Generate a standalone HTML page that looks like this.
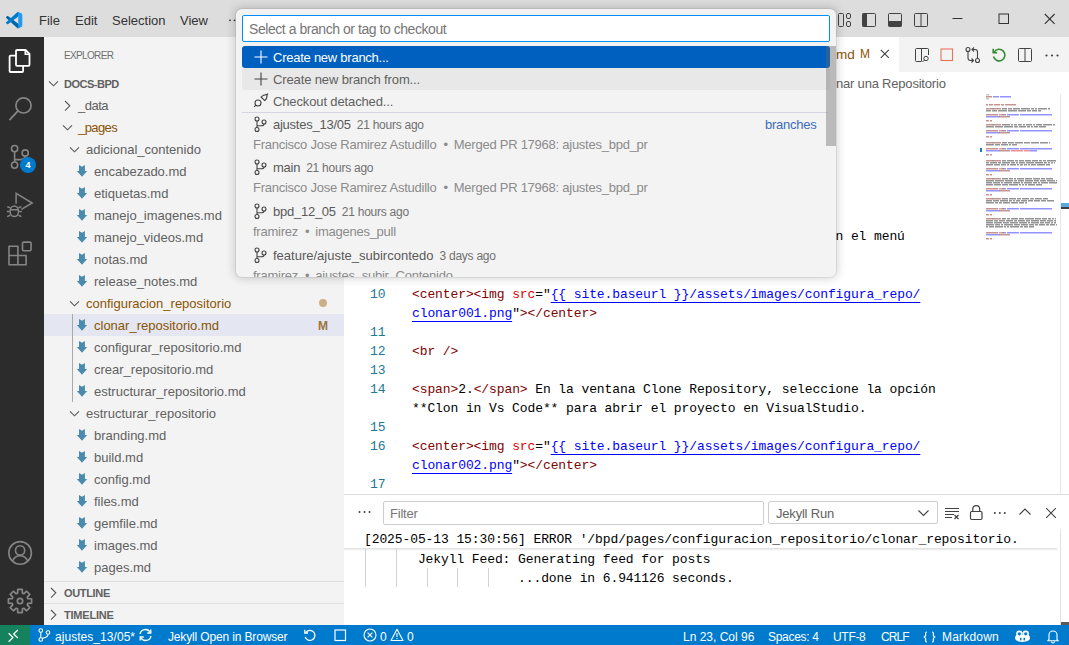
<!DOCTYPE html>
<html><head><meta charset="utf-8">
<style>
*{margin:0;padding:0;box-sizing:border-box}
html,body{width:1069px;height:645px;overflow:hidden;background:#fff}
body{position:relative;font-family:"Liberation Sans",sans-serif;font-size:13px;color:#616161}
.a{position:absolute;white-space:nowrap}
svg{position:absolute;overflow:visible}
#title{left:0;top:0;width:1069px;height:37px;background:#dddddd}
#act{left:0;top:37px;width:44px;height:588px;background:#2c2c2c}
#side{left:44px;top:37px;width:300px;height:588px;background:#f3f3f3}
#tabs{left:344px;top:37px;width:725px;height:35px;background:#f3f3f3}
#status{left:0;top:625px;width:1069px;height:20px;background:#007acc;color:#fff;font-size:12px}
.row{position:absolute;left:0;width:300px;height:22px;line-height:22px}
.mono{font-family:"Liberation Mono",monospace}
.ln{color:#237893;font-family:"Liberation Mono",monospace;font-size:13px;letter-spacing:-0.1px}
.code{color:#000;font-family:"Liberation Mono",monospace;font-size:13px;letter-spacing:-0.1px}
.tg{color:#800000}.at{color:#e50000}.lk{color:#0000ff;text-decoration:underline;text-underline-offset:4px;text-decoration-skip-ink:none}
</style></head><body>
<!-- TITLE BAR -->
<div id="title" class="a">
<svg style="left:5.7px;top:11.8px" width="16.3" height="16.3" viewBox="0 0 100 100">
<path d="M96.46 89.2 L75.86 99.1 C73.48 100.25 70.63 99.76 68.76 97.9 L1.34 36.41 C-0.47 34.75 -0.47 31.9 1.35 30.25 L6.86 25.24 C8.35 23.89 10.58 23.79 12.18 25.01 L93.41 86.63 C96.13 88.7 100 86.75 100 83.34 V83.58 C100 85.97 98.63 88.15 96.46 89.2 Z" fill="#0065a9"/>
<path d="M96.46 10.8 L75.86 0.9 C73.48 -0.25 70.63 0.24 68.76 2.1 L1.34 63.59 C-0.47 65.25 -0.47 68.1 1.35 69.75 L6.86 74.76 C8.35 76.11 10.58 76.21 12.18 74.99 L93.41 13.37 C96.13 11.3 100 13.25 100 16.66 V16.42 C100 14.03 98.63 11.85 96.46 10.8 Z" fill="#007acc"/>
<path d="M75.86 99.1 C73.48 100.25 70.63 99.76 68.76 97.9 C71.07 100.2 75 98.57 75 95.31 V4.69 C75 1.43 71.07 -0.2 68.76 2.1 C70.63 0.24 73.48 -0.25 75.86 0.9 L96.46 10.8 C98.63 11.85 100 14.03 100 16.42 V83.58 C100 85.97 98.63 88.15 96.46 89.2 Z" fill="#1f9cf0"/>
</svg>
<div class="a" style="left:39px;top:13px;color:#333;font-size:13px">File</div>
<div class="a" style="left:75px;top:13px;color:#333;font-size:13px">Edit</div>
<div class="a" style="left:112px;top:13px;color:#333;font-size:13px">Selection</div>
<div class="a" style="left:180px;top:13px;color:#333;font-size:13px">View</div>
<svg style="left:227.5px;top:14px" width="14" height="12" viewBox="0 0 14 12"><circle cx="2" cy="6.3" r="0.9" fill="#333"/><circle cx="6.5" cy="6.3" r="0.9" fill="#333"/><circle cx="11" cy="6.3" r="0.9" fill="#333"/></svg>
<!-- layout icons -->
<svg style="left:837px;top:12px" width="16" height="16" viewBox="0 0 16 16"><rect x="1.5" y="1.5" width="5" height="13" rx="1" fill="none" stroke="#424242"/><rect x="9.5" y="1.5" width="4" height="5" rx="1.5" fill="none" stroke="#424242"/><rect x="9.5" y="9.5" width="4" height="5" rx="1.5" fill="none" stroke="#424242"/></svg>
<svg style="left:861px;top:12px" width="16" height="16" viewBox="0 0 16 16"><rect x="1.5" y="1.5" width="13" height="13" rx="1" fill="none" stroke="#424242"/><rect x="1.5" y="1.5" width="4.5" height="13" fill="#424242"/></svg>
<svg style="left:887px;top:12px" width="16" height="16" viewBox="0 0 16 16"><rect x="1.5" y="1.5" width="13" height="13" rx="1" fill="none" stroke="#424242"/><rect x="1.5" y="9" width="13" height="5.5" fill="#424242"/></svg>
<svg style="left:913px;top:12px" width="16" height="16" viewBox="0 0 16 16"><rect x="1.5" y="1.5" width="13" height="13" rx="1" fill="none" stroke="#424242"/><line x1="8" y1="1.5" x2="8" y2="14.5" stroke="#424242"/></svg>
<svg style="left:952px;top:13px" width="12" height="12" viewBox="0 0 12 12"><line x1="0.5" y1="5.5" x2="10.5" y2="5.5" stroke="#333"/></svg>
<svg style="left:998px;top:13px" width="12" height="12" viewBox="0 0 12 12"><rect x="1" y="1" width="9.5" height="9.5" fill="none" stroke="#333"/></svg>
<svg style="left:1044px;top:13px" width="12" height="12" viewBox="0 0 12 12"><path d="M0.8 1 L10.6 10.8 M10.6 1 L0.8 10.8" stroke="#333" stroke-width="1.1"/></svg>
</div>
<div id="act" class="a">
<!-- files -->
<svg style="left:8px;top:10px" width="26" height="28" viewBox="0 0 26 28">
<path d="M8 8.7 H2.6 Q1.6 8.7 1.6 9.7 V24 Q1.6 25 2.6 25 H14.1 Q15.1 25 15.1 24 V18.8" fill="none" stroke="#fff" stroke-width="1.8"/>
<path d="M8 4 Q8 3 9 3 H17.5 L21.5 7 V17.8 Q21.5 18.8 20.5 18.8 H9 Q8 18.8 8 17.8 Z" fill="none" stroke="#fff" stroke-width="1.8" stroke-linejoin="round"/>
<path d="M17.3 3.5 V7.2 H21" fill="none" stroke="#fff" stroke-width="1.6"/>
</svg>
<!-- search -->
<svg style="left:8px;top:59px" width="26" height="26" viewBox="0 0 26 26">
<circle cx="15.5" cy="9.4" r="7.6" fill="none" stroke="#858585" stroke-width="1.7"/>
<line x1="10" y1="14.9" x2="1.9" y2="23.6" stroke="#858585" stroke-width="1.8" stroke-linecap="round"/>
</svg>
<!-- scm -->
<svg style="left:10px;top:107px" width="24" height="26" viewBox="0 0 24 26">
<circle cx="4.6" cy="4.6" r="3.1" fill="none" stroke="#858585" stroke-width="1.6"/>
<circle cx="4.6" cy="21.1" r="3.1" fill="none" stroke="#858585" stroke-width="1.6"/>
<circle cx="15.2" cy="9" r="3.1" fill="none" stroke="#858585" stroke-width="1.6"/>
<line x1="4.6" y1="7.7" x2="4.6" y2="18" stroke="#858585" stroke-width="1.6"/>
<path d="M15.2 12.1 Q15.2 15.6 10 15.6 H4.6" fill="none" stroke="#858585" stroke-width="1.6"/>
</svg>
<div class="a" style="left:20px;top:120px;width:16px;height:16px;border-radius:8px;background:#007acc;color:#fff;font-size:9px;font-weight:bold;text-align:center;line-height:16px">4</div>
<!-- debug -->
<svg style="left:0px;top:151px" width="44" height="40" viewBox="0 0 44 40">
<path d="M16.1 15.8 V5.3 L32.2 15 L21.4 21.3" fill="none" stroke="#858585" stroke-width="1.5" stroke-linejoin="miter"/>
<ellipse cx="14.3" cy="23.3" rx="4.2" ry="5.3" fill="none" stroke="#858585" stroke-width="1.5"/>
<path d="M10.2 21.8 H18.4 M7.2 18.6 L10.2 19.8 M21.4 18.6 L18.4 19.8 M6.8 23.6 H9.8 M21.8 23.6 H18.8 M7.2 28.6 L10.2 27.3 M21.4 28.6 L18.4 27.3" fill="none" stroke="#858585" stroke-width="1.5"/>
</svg>
<!-- extensions -->
<svg style="left:0px;top:199px" width="44" height="34" viewBox="0 0 44 34">
<path d="M9 10.3 H17.9 V19.5 H26.1 V28.7 H9 Z M9 19.5 H17.9 V28.7" fill="none" stroke="#858585" stroke-width="1.6" stroke-linejoin="round"/>
<rect x="22.5" y="6.1" width="8.6" height="8.6" rx="1.2" fill="none" stroke="#858585" stroke-width="1.6"/>
</svg>
<!-- account -->
<svg style="left:7px;top:502px" width="28" height="28" viewBox="0 0 28 28">
<circle cx="13.1" cy="13.9" r="11.3" fill="none" stroke="#858585" stroke-width="1.6"/>
<circle cx="13.1" cy="11.4" r="4.6" fill="none" stroke="#858585" stroke-width="1.6"/>
<path d="M5.6 22 Q7.6 16.7 13.1 16.7 Q18.6 16.7 20.6 22" fill="none" stroke="#858585" stroke-width="1.6"/>
</svg>
<!-- settings -->
<svg style="left:7px;top:551px" width="28" height="28" viewBox="0 0 28 28">
<path id="gear" d="M10.58 5.17 L10.77 1.41 L15.23 1.41 L15.42 5.17 L16.83 5.75 L19.62 3.23 L22.77 6.38 L20.25 9.17 L20.83 10.58 L24.59 10.77 L24.59 15.23 L20.83 15.42 L20.25 16.83 L22.77 19.62 L19.62 22.77 L16.83 20.25 L15.42 20.83 L15.23 24.59 L10.77 24.59 L10.58 20.83 L9.17 20.25 L6.38 22.77 L3.23 19.62 L5.75 16.83 L5.17 15.42 L1.41 15.23 L1.41 10.77 L5.17 10.58 L5.75 9.17 L3.23 6.38 L6.38 3.23 L9.17 5.75 Z" fill="none" stroke="#858585" stroke-width="1.7" stroke-linejoin="round"/>
<circle cx="13" cy="13" r="2.7" fill="none" stroke="#858585" stroke-width="1.7"/>
</svg>
</div>
<div id="side" class="a">
<div class="a" style="left:20px;top:13px;font-size:10px;letter-spacing:-0.65px;color:#6f6f6f">EXPLORER</div>
<svg style="left:4px;top:41px" width="12" height="12" viewBox="0 0 12 12"><path d="M1 3.3 L5.5 7.8 L10 3.3" fill="none" stroke="#5a5a5a" stroke-width="1.15"/></svg>
<div class="a" style="left:20px;top:36px;line-height:22px;font-size:11px;font-weight:bold;letter-spacing:-0.5px;color:#616161">DOCS-BPD</div>
<div class="a" style="left:0;top:277px;width:300px;height:22px;background:#e4e6f1"></div>
<div class="a" style="left:28px;top:277px;width:1px;height:88px;background:#a9a9a9"></div>
<svg style="left:17.5px;top:63px" width="12" height="12" viewBox="0 0 12 12"><path d="M3 1 L7.8 5.8 L3 10.6" fill="none" stroke="#5a5a5a" stroke-width="1.15"/></svg>
<div class="a" style="left:34px;top:58px;line-height:22px;color:#616161;letter-spacing:-0.5px">_data</div>
<svg style="left:18px;top:85px" width="12" height="12" viewBox="0 0 12 12"><path d="M1 3.3 L5.5 7.8 L10 3.3" fill="none" stroke="#5a5a5a" stroke-width="1.15"/></svg>
<div class="a" style="left:34px;top:80px;line-height:22px;color:#895503;letter-spacing:-0.6px">_pages</div>
<svg style="left:25px;top:107px" width="12" height="12" viewBox="0 0 12 12"><path d="M1 3.3 L5.5 7.8 L10 3.3" fill="none" stroke="#5a5a5a" stroke-width="1.15"/></svg>
<div class="a" style="left:42px;top:102px;line-height:22px;color:#616161">adicional_contenido</div>
<svg style="left:28px;top:123px" width="20" height="22" viewBox="0 0 20 22"><path d="M7 5.1 L10 6.8 L12.9 5.1 V11.1 H15.2 L10 16.7 L4.8 11.1 H7 Z" fill="#4a8bad"/></svg>
<div class="a" style="left:50px;top:124px;line-height:22px;color:#616161">encabezado.md</div>
<svg style="left:28px;top:145px" width="20" height="22" viewBox="0 0 20 22"><path d="M7 5.1 L10 6.8 L12.9 5.1 V11.1 H15.2 L10 16.7 L4.8 11.1 H7 Z" fill="#4a8bad"/></svg>
<div class="a" style="left:50px;top:146px;line-height:22px;color:#616161">etiquetas.md</div>
<svg style="left:28px;top:167px" width="20" height="22" viewBox="0 0 20 22"><path d="M7 5.1 L10 6.8 L12.9 5.1 V11.1 H15.2 L10 16.7 L4.8 11.1 H7 Z" fill="#4a8bad"/></svg>
<div class="a" style="left:50px;top:168px;line-height:22px;color:#616161">manejo_imagenes.md</div>
<svg style="left:28px;top:189px" width="20" height="22" viewBox="0 0 20 22"><path d="M7 5.1 L10 6.8 L12.9 5.1 V11.1 H15.2 L10 16.7 L4.8 11.1 H7 Z" fill="#4a8bad"/></svg>
<div class="a" style="left:50px;top:190px;line-height:22px;color:#616161">manejo_videos.md</div>
<svg style="left:28px;top:211px" width="20" height="22" viewBox="0 0 20 22"><path d="M7 5.1 L10 6.8 L12.9 5.1 V11.1 H15.2 L10 16.7 L4.8 11.1 H7 Z" fill="#4a8bad"/></svg>
<div class="a" style="left:50px;top:212px;line-height:22px;color:#616161">notas.md</div>
<svg style="left:28px;top:233px" width="20" height="22" viewBox="0 0 20 22"><path d="M7 5.1 L10 6.8 L12.9 5.1 V11.1 H15.2 L10 16.7 L4.8 11.1 H7 Z" fill="#4a8bad"/></svg>
<div class="a" style="left:50px;top:234px;line-height:22px;color:#616161">release_notes.md</div>
<svg style="left:25px;top:261px" width="12" height="12" viewBox="0 0 12 12"><path d="M1 3.3 L5.5 7.8 L10 3.3" fill="none" stroke="#5a5a5a" stroke-width="1.15"/></svg>
<div class="a" style="left:42px;top:256px;line-height:22px;color:#895503">configuracion_repositorio</div>
<svg style="left:28px;top:277px" width="20" height="22" viewBox="0 0 20 22"><path d="M7 5.1 L10 6.8 L12.9 5.1 V11.1 H15.2 L10 16.7 L4.8 11.1 H7 Z" fill="#4a8bad"/></svg>
<div class="a" style="left:50px;top:278px;line-height:22px;color:#895503">clonar_repositorio.md</div>
<svg style="left:28px;top:299px" width="20" height="22" viewBox="0 0 20 22"><path d="M7 5.1 L10 6.8 L12.9 5.1 V11.1 H15.2 L10 16.7 L4.8 11.1 H7 Z" fill="#4a8bad"/></svg>
<div class="a" style="left:50px;top:300px;line-height:22px;color:#616161">configurar_repositorio.md</div>
<svg style="left:28px;top:321px" width="20" height="22" viewBox="0 0 20 22"><path d="M7 5.1 L10 6.8 L12.9 5.1 V11.1 H15.2 L10 16.7 L4.8 11.1 H7 Z" fill="#4a8bad"/></svg>
<div class="a" style="left:50px;top:322px;line-height:22px;color:#616161">crear_repositorio.md</div>
<svg style="left:28px;top:343px" width="20" height="22" viewBox="0 0 20 22"><path d="M7 5.1 L10 6.8 L12.9 5.1 V11.1 H15.2 L10 16.7 L4.8 11.1 H7 Z" fill="#4a8bad"/></svg>
<div class="a" style="left:50px;top:344px;line-height:22px;color:#616161">estructurar_repositorio.md</div>
<svg style="left:25px;top:371px" width="12" height="12" viewBox="0 0 12 12"><path d="M1 3.3 L5.5 7.8 L10 3.3" fill="none" stroke="#5a5a5a" stroke-width="1.15"/></svg>
<div class="a" style="left:42px;top:366px;line-height:22px;color:#616161">estructurar_repositorio</div>
<svg style="left:28px;top:387px" width="20" height="22" viewBox="0 0 20 22"><path d="M7 5.1 L10 6.8 L12.9 5.1 V11.1 H15.2 L10 16.7 L4.8 11.1 H7 Z" fill="#4a8bad"/></svg>
<div class="a" style="left:50px;top:388px;line-height:22px;color:#616161">branding.md</div>
<svg style="left:28px;top:409px" width="20" height="22" viewBox="0 0 20 22"><path d="M7 5.1 L10 6.8 L12.9 5.1 V11.1 H15.2 L10 16.7 L4.8 11.1 H7 Z" fill="#4a8bad"/></svg>
<div class="a" style="left:50px;top:410px;line-height:22px;color:#616161">build.md</div>
<svg style="left:28px;top:431px" width="20" height="22" viewBox="0 0 20 22"><path d="M7 5.1 L10 6.8 L12.9 5.1 V11.1 H15.2 L10 16.7 L4.8 11.1 H7 Z" fill="#4a8bad"/></svg>
<div class="a" style="left:50px;top:432px;line-height:22px;color:#616161">config.md</div>
<svg style="left:28px;top:453px" width="20" height="22" viewBox="0 0 20 22"><path d="M7 5.1 L10 6.8 L12.9 5.1 V11.1 H15.2 L10 16.7 L4.8 11.1 H7 Z" fill="#4a8bad"/></svg>
<div class="a" style="left:50px;top:454px;line-height:22px;color:#616161">files.md</div>
<svg style="left:28px;top:475px" width="20" height="22" viewBox="0 0 20 22"><path d="M7 5.1 L10 6.8 L12.9 5.1 V11.1 H15.2 L10 16.7 L4.8 11.1 H7 Z" fill="#4a8bad"/></svg>
<div class="a" style="left:50px;top:476px;line-height:22px;color:#616161">gemfile.md</div>
<svg style="left:28px;top:497px" width="20" height="22" viewBox="0 0 20 22"><path d="M7 5.1 L10 6.8 L12.9 5.1 V11.1 H15.2 L10 16.7 L4.8 11.1 H7 Z" fill="#4a8bad"/></svg>
<div class="a" style="left:50px;top:498px;line-height:22px;color:#616161">images.md</div>
<svg style="left:28px;top:519px" width="20" height="22" viewBox="0 0 20 22"><path d="M7 5.1 L10 6.8 L12.9 5.1 V11.1 H15.2 L10 16.7 L4.8 11.1 H7 Z" fill="#4a8bad"/></svg>
<div class="a" style="left:50px;top:520px;line-height:22px;color:#616161">pages.md</div>
<div class="a" style="left:275px;top:262px;width:8px;height:8px;border-radius:4px;background:#cdb08a"></div>
<div class="a" style="left:274px;top:278px;line-height:22px;color:#9a7540;font-size:12px;font-weight:bold">M</div>
<div class="a" style="left:0;top:544px;width:300px;height:1px;background:#e0e0e0"></div>
<svg style="left:4px;top:550px" width="12" height="12" viewBox="0 0 12 12"><path d="M3 1 L7.8 5.8 L3 10.6" fill="none" stroke="#5a5a5a" stroke-width="1.15"/></svg>
<div class="a" style="left:20px;top:545px;line-height:22px;font-size:11px;font-weight:bold;letter-spacing:-0.33px;color:#616161">OUTLINE</div>
<div class="a" style="left:0;top:566px;width:300px;height:1px;background:#e0e0e0"></div>
<svg style="left:4px;top:572px" width="12" height="12" viewBox="0 0 12 12"><path d="M3 1 L7.8 5.8 L3 10.6" fill="none" stroke="#5a5a5a" stroke-width="1.15"/></svg>
<div class="a" style="left:20px;top:567px;line-height:22px;font-size:11px;font-weight:bold;letter-spacing:-0.22px;color:#616161">TIMELINE</div>
</div>
<div id="tabs" class="a">
<div class="a" style="left:0;top:0;width:555px;height:35px;background:#fff"></div>
<div class="a" style="left:492px;top:0;line-height:36px;color:#895503;font-size:13.5px">md</div>
<div class="a" style="left:516px;top:0;line-height:35px;color:#895503;font-size:12px">M</div>
<svg style="left:536px;top:12px" width="10" height="10" viewBox="0 0 10 10"><path d="M0.8 0.8 L8.8 8.8 M8.8 0.8 L0.8 8.8" stroke="#424242" stroke-width="1.1"/></svg>
<!-- editor actions -->
<svg style="left:570px;top:10px" width="16" height="16" viewBox="0 0 16 16"><path d="M7 14.5 H2.5 Q1.5 14.5 1.5 13.5 V2.5 Q1.5 1.5 2.5 1.5 H13.5 Q14.5 1.5 14.5 2.5 V8" fill="none" stroke="#424242"/><line x1="7.5" y1="1.5" x2="7.5" y2="14.5" stroke="#424242"/><circle cx="12" cy="11.5" r="2.2" fill="none" stroke="#424242"/><line x1="10.4" y1="13.1" x2="8.5" y2="15" stroke="#424242"/></svg>
<svg style="left:596px;top:11px" width="14" height="14" viewBox="0 0 14 14"><rect x="1" y="1" width="11.5" height="11.5" fill="none" stroke="#e8735d" stroke-width="1.1"/></svg>
<svg style="left:620px;top:9px" width="18" height="18" viewBox="0 0 18 18"><circle cx="4" cy="3.5" r="2" fill="none" stroke="#424242" stroke-width="1.1"/><circle cx="13.5" cy="14.5" r="2" fill="none" stroke="#424242" stroke-width="1.1"/><path d="M4 5.5 V12 Q4 14.5 6.5 14.5 H9 M7.5 12.5 L9.5 14.5 L7.5 16.5" fill="none" stroke="#424242" stroke-width="1.1"/><path d="M13.5 12.5 V6 Q13.5 3.5 11 3.5 H8.5 M10 1.5 L8 3.5 L10 5.5" fill="none" stroke="#424242" stroke-width="1.1"/></svg>
<svg style="left:647px;top:10px" width="16" height="16" viewBox="0 0 16 16"><path d="M3.2 5 A5.8 5.8 0 1 1 2.5 9.5" fill="none" stroke="#388a34" stroke-width="1.6"/><path d="M2.2 1.8 V5.8 H6.2" fill="none" stroke="#388a34" stroke-width="1.6"/></svg>
<svg style="left:673px;top:10px" width="16" height="16" viewBox="0 0 16 16"><rect x="1.5" y="1.5" width="13" height="13" rx="1" fill="none" stroke="#424242"/><line x1="8" y1="1.5" x2="8" y2="14.5" stroke="#424242"/></svg>
<svg style="left:700px;top:10px" width="16" height="16" viewBox="0 0 16 16"><circle cx="2.5" cy="8.5" r="1.1" fill="#424242"/><circle cx="8" cy="8.5" r="1.1" fill="#424242"/><circle cx="13.5" cy="8.5" r="1.1" fill="#424242"/></svg>
</div>
<!-- breadcrumbs -->
<div class="a" style="left:836px;top:73px;line-height:22px;color:#616161;letter-spacing:-0.2px">nar una Repositorio</div>

<!-- EDITOR CODE -->
<div class="a code" style="left:835.5px;top:227px;line-height:19px;color:#000">n el menú</div>
<div class="a ln" style="left:370px;top:285px;line-height:19px">10</div>
<div class="a code" style="left:412px;top:285px;line-height:19px"><span class="tg">&lt;center&gt;&lt;img</span> <span class="at">src</span>="<span class="lk">{{ site.baseurl }}/assets/images/configura_repo/</span></div>
<div class="a code" style="left:412px;top:304px;line-height:19px"><span class="lk">clonar001.png</span>"<span class="tg">&gt;&lt;/center&gt;</span></div>
<div class="a ln" style="left:370px;top:323px;line-height:19px">11</div>
<div class="a ln" style="left:370px;top:342px;line-height:19px">12</div>
<div class="a code" style="left:412px;top:342px;line-height:19px"><span class="tg">&lt;br /&gt;</span></div>
<div class="a ln" style="left:370px;top:361px;line-height:19px">13</div>
<div class="a ln" style="left:370px;top:380px;line-height:19px">14</div>
<div class="a code" style="left:412px;top:380px;line-height:19px"><span class="tg">&lt;span&gt;</span>2.<span class="tg">&lt;/span&gt;</span> En la ventana Clone Repository, seleccione la opción</div>
<div class="a code" style="left:412px;top:399px;line-height:19px">**Clon in Vs Code** para abrir el proyecto en VisualStudio.</div>
<div class="a ln" style="left:370px;top:418px;line-height:19px">15</div>
<div class="a ln" style="left:370px;top:437px;line-height:19px">16</div>
<div class="a code" style="left:412px;top:437px;line-height:19px"><span class="tg">&lt;center&gt;&lt;img</span> <span class="at">src</span>="<span class="lk">{{ site.baseurl }}/assets/images/configura_repo/</span></div>
<div class="a code" style="left:412px;top:456px;line-height:19px"><span class="lk">clonar002.png</span>"<span class="tg">&gt;&lt;/center&gt;</span></div>
<div class="a ln" style="left:370px;top:475px;line-height:19px">17</div>
<div class="a" style="left:1060px;top:94px;width:1px;height:400px;background:#e8e8e8"></div>
<!-- MINIMAP -->
<svg style="left:986px;top:93.5px" width="75" height="150" viewBox="0 0 75 150" opacity="0.42"><path d="M0 0h3v1.4h-3zM0 4h3v1.4h-3z" fill="#808080"/><path d="M0 2h6v1.4h-6zM0 10h2v1.4h-2zM3 10h4v1.4h-4zM8 10h6v1.4h-6zM15 10h3v1.4h-3zM19 10h11v1.4h-11zM0 14h6v1.4h-6zM8 14h7v1.4h-7zM0 20h12v1.4h-12zM14 22h10v1.4h-10zM0 26h3v1.4h-3zM4 26h2v1.4h-2zM0 30h6v1.4h-6zM8 30h7v1.4h-7zM0 36h12v1.4h-12zM14 38h10v1.4h-10zM0 42h3v1.4h-3zM4 42h2v1.4h-2zM0 48h6v1.4h-6zM8 48h7v1.4h-7zM0 54h12v1.4h-12zM14 56h10v1.4h-10zM0 60h3v1.4h-3zM4 60h2v1.4h-2zM0 66h6v1.4h-6zM8 66h7v1.4h-7zM0 74h12v1.4h-12zM14 76h10v1.4h-10zM0 80h3v1.4h-3zM4 80h2v1.4h-2zM0 84h6v1.4h-6zM8 84h7v1.4h-7zM0 94h12v1.4h-12zM14 96h10v1.4h-10zM0 100h3v1.4h-3zM4 100h2v1.4h-2zM0 104h6v1.4h-6zM8 104h7v1.4h-7zM0 114h12v1.4h-12zM14 116h10v1.4h-10zM0 120h3v1.4h-3zM4 120h2v1.4h-2zM0 124h6v1.4h-6zM8 124h7v1.4h-7zM0 138h12v1.4h-12zM14 140h10v1.4h-10zM0 144h3v1.4h-3zM4 144h2v1.4h-2z" fill="#800000"/><path d="M7 2h6v1.4h-6zM14 2h11v1.4h-11zM18 20h2v1.4h-2zM21 20h12v1.4h-12zM34 20h32v1.4h-32zM0 22h13v1.4h-13zM18 36h2v1.4h-2zM21 36h12v1.4h-12zM34 36h32v1.4h-32zM0 38h13v1.4h-13zM18 54h2v1.4h-2zM21 54h12v1.4h-12zM34 54h32v1.4h-32zM0 56h13v1.4h-13zM44 56h7v1.4h-7zM18 74h2v1.4h-2zM21 74h12v1.4h-12zM34 74h32v1.4h-32zM0 76h13v1.4h-13zM18 94h2v1.4h-2zM21 94h12v1.4h-12zM34 94h32v1.4h-32zM0 96h13v1.4h-13zM18 114h2v1.4h-2zM21 114h12v1.4h-12zM34 114h32v1.4h-32zM0 116h13v1.4h-13zM18 138h2v1.4h-2zM21 138h12v1.4h-12zM34 138h32v1.4h-32zM0 140h13v1.4h-13z" fill="#0000ff"/><path d="M6 14h2v1.4h-2zM16 14h5v1.4h-5zM22 14h4v1.4h-4zM27 14h7v1.4h-7zM35 14h9v1.4h-9zM45 14h3v1.4h-3zM49 14h2v1.4h-2zM52 14h9v1.4h-9zM62 14h2v1.4h-2zM0 16h5v1.4h-5zM6 16h5v1.4h-5zM12 16h9v1.4h-9zM22 16h9v1.4h-9zM32 16h8v1.4h-8zM41 16h4v1.4h-4zM46 16h5v1.4h-5zM52 16h3v1.4h-3zM16 20h2v1.4h-2zM13 22h1v1.4h-1zM6 30h2v1.4h-2zM16 30h8v1.4h-8zM25 30h2v1.4h-2zM28 30h3v1.4h-3zM32 30h4v1.4h-4zM37 30h2v1.4h-2zM40 30h6v1.4h-6zM47 30h2v1.4h-2zM50 30h6v1.4h-6zM57 30h9v1.4h-9zM67 30h2v1.4h-2zM0 32h8v1.4h-8zM9 32h8v1.4h-8zM18 32h9v1.4h-9zM28 32h4v1.4h-4zM33 32h7v1.4h-7zM41 32h3v1.4h-3zM45 32h2v1.4h-2zM48 32h4v1.4h-4zM53 32h7v1.4h-7zM16 36h2v1.4h-2zM13 38h1v1.4h-1zM6 48h2v1.4h-2zM16 48h5v1.4h-5zM22 48h6v1.4h-6zM29 48h8v1.4h-8zM38 48h6v1.4h-6zM45 48h8v1.4h-8zM54 48h8v1.4h-8zM63 48h1v1.4h-1zM0 50h8v1.4h-8zM9 50h5v1.4h-5zM15 50h7v1.4h-7zM23 50h2v1.4h-2zM26 50h5v1.4h-5zM16 54h2v1.4h-2zM13 56h1v1.4h-1zM6 66h2v1.4h-2zM16 66h4v1.4h-4zM21 66h7v1.4h-7zM29 66h3v1.4h-3zM33 66h5v1.4h-5zM39 66h6v1.4h-6zM46 66h6v1.4h-6zM53 66h3v1.4h-3zM57 66h3v1.4h-3zM61 66h9v1.4h-9zM0 68h3v1.4h-3zM4 68h7v1.4h-7zM12 68h3v1.4h-3zM16 68h8v1.4h-8zM25 68h4v1.4h-4zM30 68h2v1.4h-2zM33 68h6v1.4h-6zM40 68h8v1.4h-8zM49 68h8v1.4h-8zM58 68h3v1.4h-3zM62 68h2v1.4h-2zM65 68h2v1.4h-2zM68 68h1v1.4h-1zM0 70h7v1.4h-7zM8 70h6v1.4h-6zM15 70h5v1.4h-5zM21 70h2v1.4h-2zM24 70h6v1.4h-6zM31 70h2v1.4h-2zM34 70h3v1.4h-3zM38 70h3v1.4h-3zM42 70h2v1.4h-2zM45 70h5v1.4h-5zM51 70h8v1.4h-8zM60 70h4v1.4h-4zM16 74h2v1.4h-2zM13 76h1v1.4h-1zM6 84h2v1.4h-2zM16 84h6v1.4h-6zM23 84h4v1.4h-4zM28 84h2v1.4h-2zM31 84h7v1.4h-7zM39 84h7v1.4h-7zM47 84h7v1.4h-7zM55 84h4v1.4h-4zM60 84h7v1.4h-7zM0 86h8v1.4h-8zM9 86h9v1.4h-9zM19 86h8v1.4h-8zM28 86h3v1.4h-3zM32 86h6v1.4h-6zM39 86h8v1.4h-8zM48 86h5v1.4h-5zM54 86h6v1.4h-6zM61 86h8v1.4h-8zM70 86h1v1.4h-1zM0 88h6v1.4h-6zM7 88h7v1.4h-7zM15 88h2v1.4h-2zM18 88h8v1.4h-8zM27 88h7v1.4h-7zM35 88h2v1.4h-2zM38 88h8v1.4h-8zM47 88h4v1.4h-4zM52 88h2v1.4h-2zM55 88h7v1.4h-7zM63 88h8v1.4h-8zM0 90h7v1.4h-7zM8 90h7v1.4h-7zM16 90h6v1.4h-6zM23 90h9v1.4h-9zM33 90h2v1.4h-2zM36 90h2v1.4h-2zM39 90h2v1.4h-2zM42 90h7v1.4h-7zM50 90h6v1.4h-6zM16 94h2v1.4h-2zM13 96h1v1.4h-1zM6 104h2v1.4h-2zM16 104h6v1.4h-6zM23 104h7v1.4h-7zM31 104h4v1.4h-4zM36 104h7v1.4h-7zM44 104h4v1.4h-4zM49 104h7v1.4h-7zM57 104h5v1.4h-5zM0 106h6v1.4h-6zM7 106h6v1.4h-6zM14 106h8v1.4h-8zM23 106h3v1.4h-3zM27 106h2v1.4h-2zM30 106h4v1.4h-4zM35 106h6v1.4h-6zM42 106h5v1.4h-5zM48 106h6v1.4h-6zM55 106h5v1.4h-5zM61 106h7v1.4h-7zM0 108h8v1.4h-8zM9 108h3v1.4h-3zM13 108h3v1.4h-3zM17 108h7v1.4h-7zM25 108h7v1.4h-7zM33 108h5v1.4h-5zM39 108h2v1.4h-2zM16 114h2v1.4h-2zM13 116h1v1.4h-1zM6 124h2v1.4h-2zM16 124h4v1.4h-4zM21 124h3v1.4h-3zM25 124h7v1.4h-7zM33 124h5v1.4h-5zM39 124h9v1.4h-9zM49 124h6v1.4h-6zM56 124h5v1.4h-5zM62 124h3v1.4h-3zM66 124h2v1.4h-2zM69 124h1v1.4h-1zM0 126h7v1.4h-7zM8 126h4v1.4h-4zM13 126h6v1.4h-6zM20 126h7v1.4h-7zM28 126h3v1.4h-3zM32 126h7v1.4h-7zM40 126h4v1.4h-4zM45 126h8v1.4h-8zM54 126h6v1.4h-6zM61 126h6v1.4h-6zM68 126h2v1.4h-2zM0 128h7v1.4h-7zM8 128h8v1.4h-8zM17 128h6v1.4h-6zM24 128h8v1.4h-8zM33 128h8v1.4h-8zM42 128h2v1.4h-2zM45 128h8v1.4h-8zM54 128h4v1.4h-4zM59 128h5v1.4h-5zM65 128h2v1.4h-2zM68 128h2v1.4h-2zM0 130h8v1.4h-8zM9 130h5v1.4h-5zM15 130h2v1.4h-2zM18 130h9v1.4h-9zM28 130h6v1.4h-6zM35 130h7v1.4h-7zM43 130h5v1.4h-5zM49 130h3v1.4h-3zM53 130h6v1.4h-6zM60 130h3v1.4h-3zM64 130h5v1.4h-5zM70 130h1v1.4h-1zM0 132h2v1.4h-2zM3 132h5v1.4h-5zM9 132h8v1.4h-8zM18 132h2v1.4h-2zM21 132h2v1.4h-2zM24 132h9v1.4h-9zM34 132h3v1.4h-3zM38 132h4v1.4h-4zM43 132h5v1.4h-5zM16 138h2v1.4h-2zM13 140h1v1.4h-1z" fill="#000000"/><path d="M13 20h3v1.4h-3zM13 36h3v1.4h-3zM13 54h3v1.4h-3zM25 56h12v1.4h-12zM38 56h6v1.4h-6zM13 74h3v1.4h-3zM13 94h3v1.4h-3zM13 114h3v1.4h-3zM13 138h3v1.4h-3z" fill="#e50000"/></svg>
<div class="a" style="left:980px;top:148px;width:2px;height:4px;background:#1b81a8"></div><div class="a" style="left:1061px;top:203px;width:8px;height:4px;background:#5ba7e0"></div><div class="a" style="left:1061px;top:207px;width:8px;height:2px;background:#3d3d3d"></div>
<!-- PANEL -->
<div class="a" style="left:344px;top:494px;width:725px;height:131px;background:#fff"></div>
<div class="a" style="left:344px;top:494px;width:725px;height:1px;background:#dcdcdc"></div>
<svg style="left:357px;top:506px" width="16" height="16" viewBox="0 0 16 16"><circle cx="2.5" cy="6" r="1" fill="#424242"/><circle cx="7.5" cy="6" r="1" fill="#424242"/><circle cx="12.5" cy="6" r="1" fill="#424242"/></svg>
<div class="a" style="left:383px;top:501px;width:381px;height:24px;border:1px solid #cecece;background:#fff;border-radius:2px"></div>
<div class="a" style="left:390px;top:503px;line-height:22px;color:#767676;letter-spacing:-0.2px">Filter</div>
<div class="a" style="left:768px;top:501px;width:170px;height:23px;border:1px solid #cecece;background:#fff;border-radius:2px"></div>
<div class="a" style="left:776px;top:502px;line-height:23px;color:#616161;letter-spacing:-0.2px">Jekyll Run</div>
<svg style="left:917px;top:507px" width="14" height="12" viewBox="0 0 14 12"><path d="M1.5 3.5 L6.5 8.5 L11.5 3.5" fill="none" stroke="#424242" stroke-width="1.1"/></svg>
<svg style="left:944px;top:506px" width="16" height="14" viewBox="0 0 16 14"><path d="M1 2.5 H15 M1 5.5 H15 M1 8.5 H10 M1 11.5 H8" stroke="#424242" stroke-width="1.1"/><path d="M10.5 9 L14.5 13 M14.5 9 L10.5 13" stroke="#424242" stroke-width="1.2"/></svg>
<svg style="left:969px;top:504px" width="15" height="17" viewBox="0 0 15 17"><rect x="1.5" y="7.5" width="11.5" height="8" rx="1.2" fill="none" stroke="#424242" stroke-width="1.2"/><path d="M3.8 7.5 V5 A3.45 3.45 0 0 1 10.7 5 V7.5" fill="none" stroke="#424242" stroke-width="1.2"/></svg>
<svg style="left:993px;top:506px" width="16" height="16" viewBox="0 0 16 16"><circle cx="1.8" cy="7" r="1" fill="#424242"/><circle cx="6.8" cy="7" r="1" fill="#424242"/><circle cx="11.8" cy="7" r="1" fill="#424242"/></svg>
<svg style="left:1018px;top:507px" width="14" height="10" viewBox="0 0 14 10"><path d="M1.5 7.5 L7 2 L12.5 7.5" fill="none" stroke="#424242" stroke-width="1.1"/></svg>
<svg style="left:1045px;top:507px" width="12" height="12" viewBox="0 0 12 12"><path d="M1.2 1.2 L10.8 10.8 M10.8 1.2 L1.2 10.8" stroke="#424242" stroke-width="1.1"/></svg>
<div class="a code" style="left:364px;top:530px;line-height:19px;color:#000">[2025-05-13 15:30:56] ERROR '/bpd/pages/configuracion_repositorio/clonar_repositorio.</div>
<div class="a" style="left:344px;top:548px;width:713px;height:3px;background:linear-gradient(#dddddd,rgba(255,255,255,0))"></div>
<div class="a code" style="left:364px;top:550px;line-height:19px;color:#000;white-space:pre">       Jekyll Feed: Generating feed for posts</div>
<div class="a code" style="left:364px;top:569px;line-height:19px;color:#000;white-space:pre">                    ...done in 6.941126 seconds.</div>
<div class="a" style="left:365px;top:549px;width:1px;height:38px;background:#d3d3d3"></div>
<div class="a" style="left:396px;top:549px;width:1px;height:38px;background:#d3d3d3"></div>
<div class="a" style="left:427px;top:568px;width:1px;height:19px;background:#d3d3d3"></div>
<div class="a" style="left:457px;top:568px;width:1px;height:19px;background:#d3d3d3"></div>
<div class="a" style="left:488px;top:568px;width:1px;height:19px;background:#d3d3d3"></div>
<div class="a" style="left:1060px;top:529px;width:1px;height:96px;background:#e3e3e3"></div>
<div class="a" style="left:1061px;top:622px;width:8px;height:3px;background:#5a5a5a"></div>
<!-- QUICK PICK -->
<div class="a" style="left:236px;top:9px;width:600px;height:268px;background:#f3f3f3;border-radius:6px;box-shadow:0 0 0 1px rgba(0,0,0,0.06),0 0 8px 2px rgba(0,0,0,0.16);overflow:hidden">
</div>
<div class="a" style="left:242px;top:15px;width:588px;height:27px;background:#fff;border:1px solid #0090f1;border-radius:2px"></div>
<div class="a" style="left:249px;top:16px;line-height:26px;color:#767676;font-size:14px;letter-spacing:-0.45px">Select a branch or tag to checkout</div>
<div class="a" style="left:242px;top:46px;width:588px;height:22px;background:#0060c0;border-radius:3px"></div>
<div class="a" style="left:242px;top:68px;width:588px;height:22px;background:#e8e8e8;border-radius:3px"></div>
<svg style="left:254px;top:50px" width="14" height="14" viewBox="0 0 14 14"><path d="M7 0.5 V13.5 M0.5 7 H13.5" stroke="#fff" stroke-width="1.1"/></svg>
<div class="a" style="left:273px;top:47px;line-height:22px;color:#fff;letter-spacing:-0.25px">Create new branch...</div>
<svg style="left:254px;top:72px" width="14" height="14" viewBox="0 0 14 14"><path d="M7 0.5 V13.5 M0.5 7 H13.5" stroke="#424242" stroke-width="1.1"/></svg>
<div class="a" style="left:273px;top:69px;line-height:22px;color:#616161;letter-spacing:-0.13px">Create new branch from...</div>
<svg style="left:253px;top:93px" width="16" height="16" viewBox="0 0 16 16"><circle cx="5" cy="10" r="3" fill="none" stroke="#424242" stroke-width="1.1"/><path d="M2.8 12.2 L1.2 13.8" stroke="#424242" stroke-width="1.1"/><path d="M8 4 Q10 1.8 14.2 1.4 Q14 5.8 11.8 7.6 Z" fill="none" stroke="#424242" stroke-width="1.1" stroke-linejoin="round"/><path d="M14.2 1.4 L15 0.6" stroke="#424242" stroke-width="1.1"/></svg>
<div class="a" style="left:273px;top:91px;line-height:22px;color:#616161;letter-spacing:-0.13px">Checkout detached...</div>
<div class="a" style="left:242px;top:112px;width:586px;height:1px;background:#d4d4e2"></div>
<div class="a" style="left:236px;top:113px;width:600px;height:164px;overflow:hidden">
<svg style="left:17px;top:3px" width="16" height="16" viewBox="0 0 16 16"><circle cx="4" cy="3" r="2" fill="none" stroke="#424242" stroke-width="1.1"/><circle cx="4" cy="13.5" r="2" fill="none" stroke="#424242" stroke-width="1.1"/><circle cx="11" cy="6" r="2" fill="none" stroke="#424242" stroke-width="1.1"/><line x1="4" y1="5" x2="4" y2="11.5" stroke="#424242" stroke-width="1.1"/><path d="M11 8 Q11 9.8 8.5 9.8 H4" fill="none" stroke="#424242" stroke-width="1.1"/></svg>
<div class="a" style="left:37px;top:1px;line-height:22px;color:#5a5a5a;letter-spacing:-0.25px">ajustes_13/05<span style="font-size:12px;color:#717171;margin-left:6px">21 hours ago</span></div>
<div class="a" style="left:17px;top:21px;line-height:22px;color:#8b8b8b;letter-spacing:-0.25px">Francisco Jose Ramirez Astudillo<span style="margin:0 6px 0 7px">&bull;</span>Merged PR 17968: ajustes_bpd_pr</div>
<div class="a" style="left:529px;top:1px;line-height:22px;color:#3a6dba;letter-spacing:-0.25px">branches</div>
<svg style="left:17px;top:46px" width="16" height="16" viewBox="0 0 16 16"><circle cx="4" cy="3" r="2" fill="none" stroke="#424242" stroke-width="1.1"/><circle cx="4" cy="13.5" r="2" fill="none" stroke="#424242" stroke-width="1.1"/><circle cx="11" cy="6" r="2" fill="none" stroke="#424242" stroke-width="1.1"/><line x1="4" y1="5" x2="4" y2="11.5" stroke="#424242" stroke-width="1.1"/><path d="M11 8 Q11 9.8 8.5 9.8 H4" fill="none" stroke="#424242" stroke-width="1.1"/></svg>
<div class="a" style="left:37px;top:44px;line-height:22px;color:#5a5a5a;letter-spacing:-0.25px">main<span style="font-size:12px;color:#717171;margin-left:6px">21 hours ago</span></div>
<div class="a" style="left:17px;top:64px;line-height:22px;color:#8b8b8b;letter-spacing:-0.25px">Francisco Jose Ramirez Astudillo<span style="margin:0 6px 0 7px">&bull;</span>Merged PR 17968: ajustes_bpd_pr</div>
<svg style="left:17px;top:90px" width="16" height="16" viewBox="0 0 16 16"><circle cx="4" cy="3" r="2" fill="none" stroke="#424242" stroke-width="1.1"/><circle cx="4" cy="13.5" r="2" fill="none" stroke="#424242" stroke-width="1.1"/><circle cx="11" cy="6" r="2" fill="none" stroke="#424242" stroke-width="1.1"/><line x1="4" y1="5" x2="4" y2="11.5" stroke="#424242" stroke-width="1.1"/><path d="M11 8 Q11 9.8 8.5 9.8 H4" fill="none" stroke="#424242" stroke-width="1.1"/></svg>
<div class="a" style="left:37px;top:88px;line-height:22px;color:#5a5a5a;letter-spacing:-0.25px">bpd_12_05<span style="font-size:12px;color:#717171;margin-left:6px">21 hours ago</span></div>
<div class="a" style="left:17px;top:108px;line-height:22px;color:#8b8b8b;letter-spacing:-0.25px">framirez<span style="margin:0 6px 0 7px">&bull;</span>imagenes_pull</div>
<svg style="left:17px;top:134px" width="16" height="16" viewBox="0 0 16 16"><circle cx="4" cy="3" r="2" fill="none" stroke="#424242" stroke-width="1.1"/><circle cx="4" cy="13.5" r="2" fill="none" stroke="#424242" stroke-width="1.1"/><circle cx="11" cy="6" r="2" fill="none" stroke="#424242" stroke-width="1.1"/><line x1="4" y1="5" x2="4" y2="11.5" stroke="#424242" stroke-width="1.1"/><path d="M11 8 Q11 9.8 8.5 9.8 H4" fill="none" stroke="#424242" stroke-width="1.1"/></svg>
<div class="a" style="left:37px;top:132px;line-height:22px;color:#5a5a5a;letter-spacing:0px">feature/ajuste_subircontedo<span style="font-size:12px;color:#717171;margin-left:6px;letter-spacing:-0.25px">3 days ago</span></div>
<div class="a" style="left:17px;top:152px;line-height:22px;color:#8b8b8b;letter-spacing:-0.25px">framirez<span style="margin:0 6px 0 7px">&bull;</span>ajustes_subir_Contenido</div>
</div>
<div class="a" style="left:826px;top:46px;width:10px;height:100px;background:rgba(100,100,100,0.4)"></div>
<div id="status" class="a">
<div class="a" style="left:0;top:0;width:30px;height:20px;background:#16825d"></div>
<svg style="left:0px;top:0px" width="30" height="20" viewBox="0 0 30 20"><path d="M8.6 8.2 L13 12.5 L8.6 16.8 M17.9 5 L13.6 9 L17.9 13" fill="none" stroke="#fff" stroke-width="1.2"/></svg>
<svg style="left:38px;top:3px" width="13" height="14" viewBox="0 0 13 14"><circle cx="2.8" cy="2.5" r="1.8" fill="none" stroke="#fff" stroke-width="1.1"/><circle cx="2.8" cy="11.5" r="1.8" fill="none" stroke="#fff" stroke-width="1.1"/><circle cx="10" cy="4.5" r="1.8" fill="none" stroke="#fff" stroke-width="1.1"/><line x1="2.8" y1="4.3" x2="2.8" y2="9.7" stroke="#fff" stroke-width="1.1"/><path d="M10 6.3 Q10 9.5 4 10.3" fill="none" stroke="#fff" stroke-width="1.1"/></svg>
<div class="a" style="left:55px;top:2px;line-height:20px;letter-spacing:0.05px">ajustes_13/05*</div>
<svg style="left:138px;top:3px" width="15" height="14" viewBox="0 0 15 14"><path d="M2 6 A5.5 5.5 0 0 1 12.3 4.5 M13 8 A5.5 5.5 0 0 1 2.7 9.5" fill="none" stroke="#fff" stroke-width="1.3"/><path d="M12.8 1.5 V5 H9.3 M2.2 12.5 V9 H5.7" fill="none" stroke="#fff" stroke-width="1.3"/></svg>
<div class="a" style="left:168px;top:2px;line-height:20px;letter-spacing:-0.15px">Jekyll Open in Browser</div>
<svg style="left:303px;top:4px" width="14" height="13" viewBox="0 0 14 13"><path d="M3 3.3 A5 5 0 1 1 2.2 8" fill="none" stroke="#fff" stroke-width="1.3"/><path d="M1.8 0.8 V4 H5" fill="none" stroke="#fff" stroke-width="1.3"/></svg>
<svg style="left:334px;top:4px" width="13" height="13" viewBox="0 0 13 13"><rect x="1" y="1" width="10.5" height="10.5" fill="none" stroke="#fff" stroke-width="1.2"/></svg>
<svg style="left:363px;top:3px" width="14" height="14" viewBox="0 0 14 14"><circle cx="7" cy="7" r="6" fill="none" stroke="#fff" stroke-width="1.1"/><path d="M4.6 4.6 L9.4 9.4 M9.4 4.6 L4.6 9.4" stroke="#fff" stroke-width="1.1"/></svg>
<div class="a" style="left:380px;top:2px;line-height:20px">0</div>
<svg style="left:390px;top:3px" width="14" height="14" viewBox="0 0 14 14"><path d="M7 1.3 L13 12.5 H1 Z" fill="none" stroke="#fff" stroke-width="1.1" stroke-linejoin="round"/><line x1="7" y1="5" x2="7" y2="9" stroke="#fff" stroke-width="1.1"/><circle cx="7" cy="10.6" r="0.7" fill="#fff"/></svg>
<div class="a" style="left:407px;top:2px;line-height:20px">0</div>
<div class="a" style="left:683px;top:2px;line-height:20px;letter-spacing:0px">Ln 23, Col 96</div>
<div class="a" style="left:768px;top:2px;line-height:20px;letter-spacing:-0.3px">Spaces: 4</div>
<div class="a" style="left:833px;top:2px;line-height:20px;letter-spacing:-0.3px">UTF-8</div>
<div class="a" style="left:881px;top:2px;line-height:20px;letter-spacing:-0.9px">CRLF</div>
<svg style="left:923px;top:6px" width="14" height="12" viewBox="0 0 14 12"><path d="M4 1 Q2.6 1 2.6 2.3 V4.8 L1.2 6 L2.6 7.2 V9.7 Q2.6 11 4 11" fill="none" stroke="#fff" stroke-width="1.2"/><path d="M9 1 Q10.4 1 10.4 2.3 V4.8 L11.8 6 L10.4 7.2 V9.7 Q10.4 11 9 11" fill="none" stroke="#fff" stroke-width="1.2"/></svg>
<div class="a" style="left:942px;top:2px;line-height:20px;letter-spacing:0.2px">Markdown</div>
<svg style="left:1014px;top:5px" width="17" height="13" viewBox="0 0 17 13"><path d="M2.5 5 Q1 6 1 8 Q1 11.5 8.5 12 Q16 11.5 16 8 Q16 6 14.5 5 Z" fill="#fff"/><circle cx="5.3" cy="3.8" r="3.2" fill="#fff"/><circle cx="11.7" cy="3.8" r="3.2" fill="#fff"/><circle cx="5.3" cy="3.8" r="1.6" fill="#007acc"/><circle cx="11.7" cy="3.8" r="1.6" fill="#007acc"/><rect x="6" y="7.8" width="1.5" height="2.6" fill="#007acc"/><rect x="9.5" y="7.8" width="1.5" height="2.6" fill="#007acc"/></svg>
<svg style="left:1045.5px;top:4px" width="14" height="14" viewBox="0 0 14 14"><path d="M3 10.5 V6 A4 4 0 0 1 11 6 V10.5 L12.3 11.8 H1.7 Z" fill="none" stroke="#fff" stroke-width="1.1" stroke-linejoin="round"/><path d="M5.5 12.5 A1.5 1.5 0 0 0 8.5 12.5" fill="none" stroke="#fff" stroke-width="1.1"/></svg>
</div>
</body></html>
